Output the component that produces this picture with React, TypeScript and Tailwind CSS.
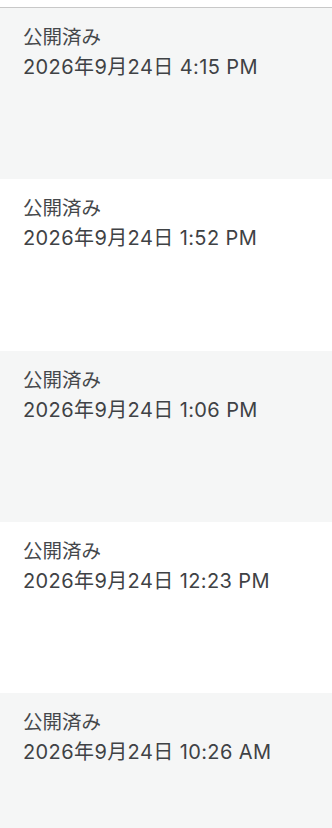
import React from 'react';

const items = [
  '2026年9月24日 4:15 PM',
  '2026年9月24日 1:52 PM',
  '2026年9月24日 1:06 PM',
  '2026年9月24日 12:23 PM',
  '2026年9月24日 10:26 AM',
];

const App: React.FC = () => {
  return (
    <div
      className="min-h-screen bg-white pt-[7px]"
      style={{ fontFamily: 'Inter, "Noto Sans CJK JP", sans-serif' }}
    >
      <div className="border-t border-[#c8c8c8]">
        {items.map((date, i) => (
          <div
            key={date}
            className={`h-[171.25px] px-[23px] pt-[15px] ${i % 2 === 0 ? 'bg-[#f5f6f6]' : 'bg-white'}`}
          >
            <p className="text-[19.5px] leading-[28px] text-[#45484b]">公開済み</p>
            <p className="mt-[2px] text-[20px] leading-[28px] tracking-[0.02em] text-[#3f4245]">{date}</p>
          </div>
        ))}
      </div>
    </div>
  );
};

export default App;
